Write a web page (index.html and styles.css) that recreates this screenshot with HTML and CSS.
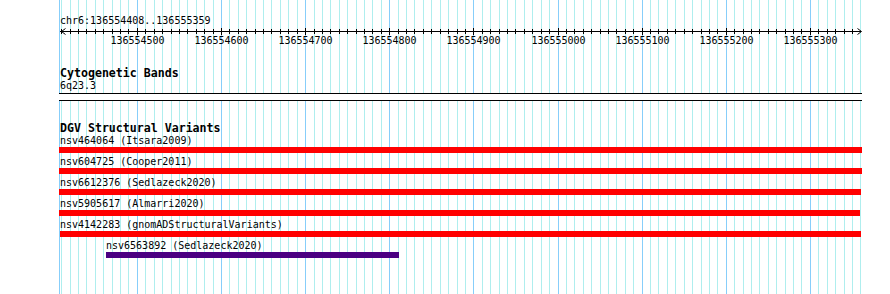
FILE: index.html
```html
<!DOCTYPE html>
<html>
  <head>
    <title>chr6:136554408..136555359</title>
    <link rel="stylesheet" href="styles.css">
  </head>
  <body>
    <div class="browser">
      <div class="panel panel-top">
        <svg class="grid"></svg>
        <div class="track-content">
          <div class="label position-label">chr6:136554408..136555359</div>
          <svg id="ruler" class="ruler" width="803" height="19"></svg>
          <div class="track-title cyto-title">Cytogenetic Bands</div>
          <div class="label">6q23.3</div>
        </div>
      </div>

      <div class="panel panel-bottom">
        <svg class="grid"></svg>
        <div class="track-content">
          <div class="track-title dgv-title">DGV Structural Variants</div>

          <div class="feature">
            <div class="label">nsv464064 (Itsara2009)</div>
            <div class="bar bar-loss" style="margin-left: 0px; width: 803px"></div>
          </div>
          <div class="feature">
            <div class="label">nsv604725 (Cooper2011)</div>
            <div class="bar bar-loss" style="margin-left: 0px; width: 803px"></div>
          </div>
          <div class="feature">
            <div class="label">nsv6612376 (Sedlazeck2020)</div>
            <div class="bar bar-loss" style="margin-left: 0px; width: 802px"></div>
          </div>
          <div class="feature">
            <div class="label">nsv5905617 (Almarri2020)</div>
            <div class="bar bar-loss" style="margin-left: 0px; width: 801px"></div>
          </div>
          <div class="feature">
            <div class="label">nsv4142283 (gnomADStructuralVariants)</div>
            <div class="bar bar-loss" style="margin-left: 1px; width: 801px"></div>
          </div>
          <div class="feature">
            <div class="label" style="margin-left: 46px">nsv6563892 (Sedlazeck2020)</div>
            <div class="bar bar-inversion" style="margin-left: 47px; width: 293px"></div>
          </div>
        </div>
      </div>
    </div>

    <script>
      const START = 136554408;
      const END = 136555359;
      const SCALE = 800 / (END - START);
      const SVG_NS = "http://www.w3.org/2000/svg";

      // page x of a base, relative to the panel's left edge (59px)
      function toX(bp) {
        return Math.floor(60 + (bp - START) * SCALE) - 59;
      }

      function rect(svg, x, y, w, h, cls) {
        const r = document.createElementNS(SVG_NS, "rect");
        r.setAttribute("x", x);
        r.setAttribute("y", y);
        r.setAttribute("width", w);
        r.setAttribute("height", h);
        if (cls) r.setAttribute("class", cls);
        svg.appendChild(r);
      }

      const firstTick = Math.ceil(START / 10) * 10;

      document.querySelectorAll(".grid").forEach((svg) => {
        rect(svg, 0, 0, 1, "100%", "grid-major");
        for (let bp = firstTick; bp < END; bp += 10) {
          rect(svg, toX(bp), 0, 1, "100%", bp % 100 === 0 ? "grid-major" : "grid-minor");
        }
        rect(svg, toX(END), 0, 1, "100%", "grid-minor");
      });

      const ruler = document.getElementById("ruler");
      rect(ruler, 1, 4, 801, 1, "axis");

      ["6.5,1.5 2.5,4.5 6.5,7.5", "798.5,1.5 802.5,4.5 798.5,7.5"].forEach((pts) => {
        const arrow = document.createElementNS(SVG_NS, "polyline");
        arrow.setAttribute("points", pts);
        arrow.setAttribute("class", "arrow");
        ruler.appendChild(arrow);
      });

      for (let bp = firstTick; bp < END; bp += 10) {
        const x = toX(bp);
        if (bp % 100 === 0) {
          rect(ruler, x, 1, 1, 7, "axis");
          const label = document.createElementNS(SVG_NS, "text");
          label.setAttribute("x", x + 0.5);
          label.setAttribute("y", 17);
          label.setAttribute("class", "tick-label");
          label.textContent = bp;
          ruler.appendChild(label);
        } else {
          rect(ruler, x, 2, 1, 5, "axis");
        }
      }
    </script>
  </body>
</html>
```

FILE: styles.css
```css
body {
  margin: 0;
  background-color: #ffffff;
}
.browser {
  width: 890px;
  height: 294px;
  overflow: hidden;
}
.panel {
  position: relative;
  margin-left: 59px;
  width: 803px;
}
.panel-top {
  height: 93px;
  border-bottom: 1px solid #000000;
}
.panel-bottom {
  margin-top: 6px;
  height: 193px;
  border-top: 1px solid #000000;
}
.grid {
  position: absolute;
  left: 0;
  top: 0;
  width: 100%;
  height: 100%;
}
.grid-minor {
  fill: #afeeee;
}
.grid-major {
  fill: #87cefa;
}
.track-content {
  position: relative;
}
.label {
  font: 10px/12px "DejaVu Sans Mono", monospace;
  padding-left: 1px;
  white-space: pre;
  color: #000000;
}
.position-label {
  padding-top: 15px;
}
.ruler {
  display: block;
  shape-rendering: crispEdges;
}
.axis {
  fill: #000000;
}
.arrow {
  fill: none;
  stroke: #000000;
  stroke-width: 1;
  shape-rendering: auto;
}
.tick-label {
  font: 10px "DejaVu Sans Mono", monospace;
  text-anchor: middle;
  fill: #000000;
}
.track-title {
  font: bold 11.6px/13px "DejaVu Sans Mono", monospace;
  padding-left: 1px;
  white-space: pre;
  color: #000000;
}
.cyto-title {
  margin-top: 21px;
}
.dgv-title {
  padding-top: 21px;
}
.bar {
  height: 6px;
  margin-bottom: 3px;
}
.bar-loss {
  background-color: #ff0000;
}
.bar-inversion {
  background-color: #4b0082;
}
```
